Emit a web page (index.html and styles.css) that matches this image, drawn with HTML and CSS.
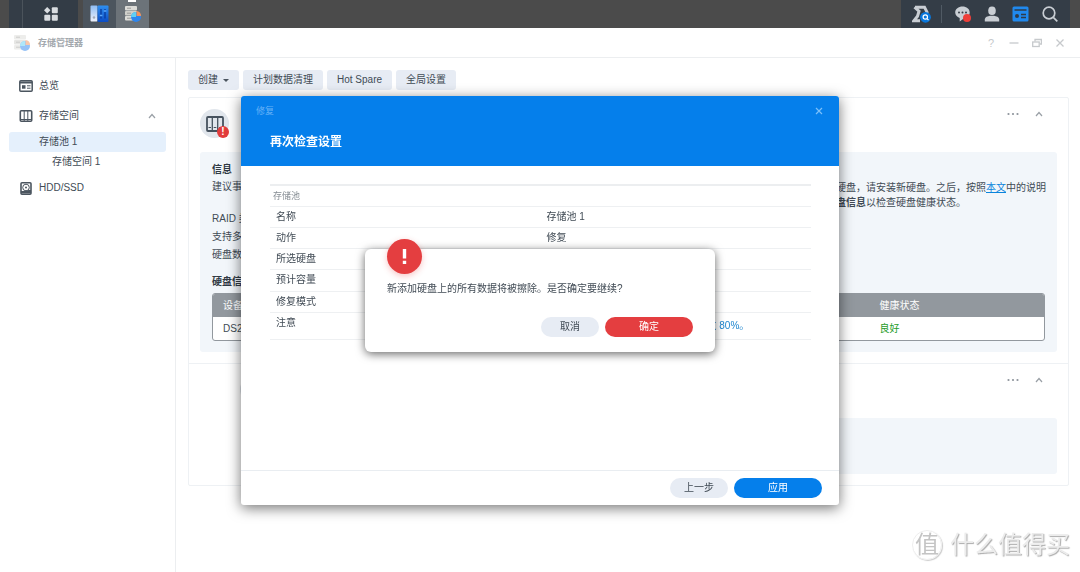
FILE: index.html
```
<!DOCTYPE html>
<html lang="zh-CN">
<head>
<meta charset="utf-8">
<title>存储管理器</title>
<link rel="stylesheet" href="styles.css">
</head>
<body>
<svg class="defs" aria-hidden="true">
  <defs>
    <linearGradient id="panel-blue" x1="0" y1="0" x2="0" y2="1"><stop offset="0" stop-color="#2f8ff0"/><stop offset="1" stop-color="#0b4cc4"/></linearGradient>
    <linearGradient id="panel-light" x1="0" y1="0" x2="0" y2="1"><stop offset="0" stop-color="#8fbdf3"/><stop offset="1" stop-color="#eef1fa"/></linearGradient>
    <symbol id="storage" viewBox="0 0 18 18">
      <rect x="1" y="1" width="12" height="4.500" rx="1" fill="#dcdcd8"/><rect x="1" y="6" width="12" height="4.500" rx="1" fill="#cfcfca"/><rect x="1" y="11" width="12" height="4.500" rx="1" fill="#dcdcd8"/>
      <path d="M3 3.200h4M3 8.200h4M3 13.200h4" stroke="#9a9a98"/>
      <circle cx="12" cy="12" r="5" fill="#2f86ee"/><path d="M12 12V7a5 5 0 0 0-5 5z" fill="#5fd0f5"/><path d="M12.500 11V6a5 5 0 0 1 4.500 5z" fill="#f4935c"/>
    </symbol>
    <symbol id="pool" viewBox="0 0 18 16"><rect x="1" y="1" width="16" height="14" rx="1" fill="none" stroke="#46525e" stroke-width="1.800"/><path d="M6.300 1v14M11.700 1v14" stroke="#46525e" stroke-width="1.300"/><path d="M2.500 11.500h2.500M7.700 11.500h2.600M13 11.500h2.500" stroke="#46525e"/></symbol>
    <symbol id="up" viewBox="0 0 8 6"><path d="M1 5l3-3.500L7 5" fill="none" stroke="#9aa0a6" stroke-width="1.200"/></symbol>
    <symbol id="more" viewBox="0 0 12 4"><circle cx="1.500" cy="2" r="1.100" fill="#8d949b"/><circle cx="6" cy="2" r="1.100" fill="#8d949b"/><circle cx="10.500" cy="2" r="1.100" fill="#8d949b"/></symbol>
  </defs>
</svg>

<header class="taskbar">
  <div class="task-edge"></div>
  <button class="task task-menu" aria-label="主菜单"><svg width="14" height="14" viewBox="0 0 14 14" fill="#d9dce0"><path d="M3.200 0l3.200 3.200-3.200 3.200L0 3.200z"/><rect x="7.800" y="0.300" width="6" height="6" rx="1"/><rect x="0.300" y="7.800" width="6" height="6" rx="1"/><rect x="7.800" y="7.800" width="6" height="6" rx="1"/></svg></button>
  <button class="task task-app" aria-label="控制面板"><svg width="19" height="18" viewBox="0 0 19 18"><rect x="0.500" y="0.500" width="7" height="16" rx="1" fill="url(#panel-light)"/><circle cx="4" cy="12.500" r="1.200" fill="#a1a9b8"/><rect x="7.500" y="0.500" width="11" height="16.500" rx="1" fill="url(#panel-blue)"/><path d="M11 4v9.500M15 4v9.500" stroke="#073b9d" stroke-width="1.300"/><path d="M9.800 10.500h2.600M13.700 6h2.600" stroke="#5ba9fa" stroke-width="1.500"/></svg></button>
  <button class="task task-app task-active" aria-label="存储管理器"><svg width="18" height="18"><use href="#storage"/></svg></button>
  <div class="tray">
    <button class="tray-item" aria-label="资源监控"><svg width="20" height="18" viewBox="0 0 20 18"><path d="M3 2.200h9.500l3 6M2.500 2.200l4.500 4-1.500 5-3.500 4.500h6M7 6.200l-1.500 5" fill="none" stroke="#c9ced4" stroke-width="3"/><circle cx="13.500" cy="12.300" r="5.400" fill="#0877dd"/><circle cx="13.300" cy="12" r="2.200" fill="none" stroke="#fff" stroke-width="1.200"/><path d="M15 13.700l1.500 1.500" stroke="#fff" stroke-width="1.200"/></svg></button>
    <span class="tray-line"></span>
    <button class="tray-item" aria-label="通知"><svg width="18" height="18" viewBox="0 0 18 18"><path d="M8.500 1.500c4 0 7.200 2.500 7.200 6s-3 6-6 6l-4 3v-3.600C3 12 1.200 10 1.200 7.500c0-3.500 3.300-6 7.300-6z" fill="#c9ced4"/><circle cx="5" cy="7.500" r="1" fill="#343d47"/><circle cx="8.500" cy="7.500" r="1" fill="#343d47"/><circle cx="12" cy="7.500" r="1" fill="#343d47"/><circle cx="13" cy="13" r="4" fill="#ee3f3a"/></svg></button>
    <button class="tray-item" aria-label="用户"><svg width="16" height="16" viewBox="0 0 16 16" fill="#c9ced4"><ellipse cx="8" cy="4.800" rx="3.800" ry="4.300"/><path d="M0.800 15.500v-2c0-2.400 3-3.500 5.200-3.800h4c2.200.3 5.200 1.400 5.200 3.800v2z"/></svg></button>
    <button class="tray-item" aria-label="小组件"><svg width="17" height="16" viewBox="0 0 17 16"><rect x="0.500" y="0.500" width="16" height="15" rx="1.500" fill="#2089ee"/><path d="M2.500 4h12M9 8.500h5M9 11.500h5" stroke="#2f3b48" stroke-width="1.500"/><circle cx="5" cy="10" r="2" fill="#2f3b48"/></svg></button>
    <button class="tray-item" aria-label="搜索"><svg width="16" height="16" viewBox="0 0 16 16" fill="none" stroke="#c9ced4" stroke-width="1.700"><circle cx="7" cy="7" r="5.800"/><path d="M11.300 11.300l4 4"/></svg></button>
  </div>
</header>

<div class="window">
  <div class="titlebar">
    <svg class="faded" width="18" height="18"><use href="#storage"/></svg>
    <h1 class="app-title">存储管理器</h1>
    <div class="window-tools">
      <button aria-label="帮助" class="help">?</button>
      <button aria-label="最小化"><svg width="10" height="10" viewBox="0 0 10 10"><path d="M0.500 5h9" stroke="#c6c9cc" stroke-width="1.300"/></svg></button>
      <button aria-label="还原"><svg width="10" height="10" viewBox="0 0 10 10" fill="none" stroke="#c6c9cc" stroke-width="1.300"><path d="M3 3.500V1.500h6.400v4.500H8"/><rect x="0.700" y="4" width="6.500" height="4.500"/></svg></button>
      <button aria-label="关闭"><svg width="10" height="10" viewBox="0 0 10 10"><path d="M1.500 1.500l7 7M8.500 1.500l-7 7" stroke="#c6c9cc" stroke-width="1.300"/></svg></button>
    </div>
  </div>

  <div class="content">
    <nav class="sidebar">
      <a class="nav-item" href="#"><svg width="14" height="12" viewBox="0 0 14 12"><rect x="0.800" y="0.800" width="12.400" height="10.400" rx="1" fill="none" stroke="#4b555f" stroke-width="1.500"/><path d="M1 2.500h12" stroke="#4b555f" stroke-width="2"/><rect x="3" y="5.200" width="3.500" height="3.500" fill="#4b555f"/><path d="M8 5.800h3.500M8 8.200h3.500" stroke="#4b555f"/></svg>总览</a>
      <a class="nav-item" href="#"><svg width="14" height="12" viewBox="0 0 14 12"><rect x="1.300" y="0.800" width="11.400" height="10.400" rx="1" fill="none" stroke="#4b555f" stroke-width="1.600"/><path d="M5.200 1v10M8.800 1v10M2 9.500h10" stroke="#4b555f"/></svg>存储空间<svg class="nav-arrow" width="8" height="6"><use href="#up"/></svg></a>
      <a class="nav-sub nav-selected" href="#">存储池 1</a>
      <a class="nav-sub nav-deep" href="#">存储空间 1</a>
      <a class="nav-item nav-last" href="#"><svg width="14" height="13" viewBox="0 0 14 13"><rect x="2" y="0.800" width="10" height="11.400" rx="1" fill="none" stroke="#4b555f" stroke-width="1.600"/><path d="M2 9h3l2-1h5v3.500H2z" fill="#4b555f"/><circle cx="7" cy="5.500" r="3.300" fill="#fff" stroke="#4b555f"/><circle cx="7" cy="5.500" r="1" fill="#4b555f"/></svg>HDD/SSD</a>
    </nav>

    <main class="main">
      <div class="toolbar">
        <button class="tool">创建 <span class="caret"></span></button>
        <button class="tool">计划数据清理</button>
        <button class="tool">Hot Spare</button>
        <button class="tool">全局设置</button>
      </div>
      <div class="card">
        <section class="pool">
          <div class="pool-head">
            <span class="pool-icon"><svg width="18" height="16"><use href="#pool"/></svg><span class="alert-badge">!</span></span>
            <div class="pool-name"><span>存储池 1</span><span>堪用</span></div>
            <button class="plain" aria-label="更多"><svg width="12" height="4"><use href="#more"/></svg></button>
            <button class="plain" aria-label="收起"><svg width="8" height="6"><use href="#up"/></svg></button>
          </div>
          <div class="info">
            <h2>信息</h2>
            <dl class="facts">
              <dt>建议事项</dt>
              <dd class="advice">存储池已损毁并处于降级状态，我们建议您尽快修复该存储池以确保数据安全。若系统中没有可用于修复操作的硬盘，请安装新硬盘。之后，按照<a href="#">本文</a>中的说明<br>进行操作以更换有问题的硬盘。修复完成之后，存储池的状态将会恢复为正常。您也可以随时前往页面下方的<b>硬盘信息</b>以检查硬盘健康状态。</dd>
              <dt>RAID 类型</dt><dd>RAID 5</dd>
              <dt>支持多个存储空间</dt><dd>是</dd>
              <dt>硬盘数量下限</dt><dd>3</dd>
            </dl>
            <h2>硬盘信息</h2>
            <table class="disks">
              <thead><tr><th>设备</th><th class="status-col">健康状态</th></tr></thead>
              <tbody><tr><td>DS220+</td><td class="healthy">良好</td></tr></tbody>
            </table>
          </div>
        </section>
        <section class="pool pool-volume">
          <div class="pool-head">
            <span class="pool-icon"></span>
            <div class="pool-name"></div>
            <button class="plain" aria-label="更多"><svg width="12" height="4"><use href="#more"/></svg></button>
            <button class="plain" aria-label="收起"><svg width="8" height="6"><use href="#up"/></svg></button>
          </div>
          <div class="info info-volume"></div>
        </section>
      </div>
    </main>
  </div>
</div>

<div class="overlay">
  <section class="wizard" role="dialog" aria-labelledby="wizard-title">
    <header class="wizard-head">
      <div class="wizard-bar"><span>修复</span><button class="wizard-close" aria-label="关闭"><svg width="8" height="8" viewBox="0 0 8 8"><path d="M1 1l6 6M7 1L1 7" stroke="#7cc0fa" stroke-width="1.200"/></svg></button></div>
      <h2 id="wizard-title">再次检查设置</h2>
    </header>
    <div class="wizard-body">
      <table class="summary">
        <thead><tr><th colspan="2">存储池</th></tr></thead>
        <tbody>
          <tr><td>名称</td><td>存储池 1</td></tr>
          <tr><td>动作</td><td>修复</td></tr>
          <tr><td>所选硬盘</td><td>硬盘 2</td></tr>
          <tr class="tall"><td>预计容量</td><td>3.6 TB</td></tr>
          <tr><td>修复模式</td><td>常规修复</td></tr>
          <tr class="note"><td>注意</td><td class="note-value">请确保该存储池的空间使用率不要超过 80%。</td></tr>
        </tbody>
      </table>
    </div>
    <footer class="wizard-foot">
      <button class="pill">上一步</button>
      <button class="pill pill-wide pill-blue">应用</button>
    </footer>
  </section>
</div>

<div class="overlay">
  <section class="message" role="alertdialog" aria-labelledby="message-text">
    <span class="message-icon"><svg width="35" height="35" viewBox="0 0 35 35"><path d="M15.800 10h3.400v9.500h-3.400zM15.800 21.800h3.400V25h-3.400z" fill="#fff"/></svg></span>
    <p id="message-text">新添加硬盘上的所有数据将被擦除。是否确定要继续?</p>
    <div class="message-actions">
      <button class="pill">取消</button>
      <button class="pill pill-wide pill-red">确定</button>
    </div>
  </section>
</div>

<div class="watermark"><span class="watermark-mark">值</span><span>什么值得买</span></div>
</body>
</html>
```
FILE: styles.css
```
* { box-sizing: border-box; }
body {
  margin: 0;
  min-height: 100vh;
  display: flex;
  flex-direction: column;
  background: #fff;
  color: #414b55;
  font: 10px/16px "Liberation Sans", "Noto Sans CJK SC", sans-serif;
  overflow: hidden;
}
button { border: 0; padding: 0; background: none; color: inherit; font: inherit; cursor: pointer; }
h1, h2, p, dl, dd { margin: 0; }
svg { display: block; flex: none; }
a { color: inherit; text-decoration: none; }
.defs { position: absolute; width: 0; height: 0; }

/* Taskbar */
.taskbar { display: flex; height: 28px; padding: 0 10px 0 9px; background: #4b4b4b; }
.task-edge { width: 14px; background: #343d47; border-right: 1px solid #4b535b; }
.task { display: grid; place-items: center; }
.task-menu { width: 55px; margin-right: 5px; background: #333c46; }
.task-app { width: 33px; background: #4c555e; }
.task-active { position: relative; background: #6c7379; }
.task-active::before { content: ""; position: absolute; top: 0; left: 12px; width: 8px; height: 2px; background: #fff; }
.tray { display: flex; align-items: center; margin-left: auto; padding: 0 12px 0 11px; gap: 12px; background: #343d47; }
.tray-item { display: grid; place-items: center; width: 17px; }
.tray-line { width: 1px; height: 18px; background: #505a64; }

/* Window */
.window { flex: 1; display: flex; flex-direction: column; }
.titlebar { display: flex; align-items: center; height: 30px; padding: 0 15px 0 13px; gap: 7px; border-bottom: 1px solid #eceef0; }
.faded { opacity: 0.5; }
.app-title { font-size: 9px; font-weight: bold; color: #a3a8ad; }
.window-tools { display: flex; gap: 13px; margin-left: auto; color: #c6c9cc; }
.window-tools button { display: grid; place-items: center; width: 10px; }
.window-tools .help { font-size: 11px; }
.content { flex: 1; display: flex; }
.sidebar { width: 176px; padding: 18px 9px; border-right: 1px solid #eceef0; display: flex; flex-direction: column; }
.nav-item { display: flex; align-items: center; height: 20px; margin-bottom: 10px; padding: 0 10px; gap: 6px; }
.nav-item + .nav-item { margin-bottom: 6px; }
.nav-arrow { margin-left: auto; }
.nav-sub { height: 20px; padding-left: 30px; line-height: 20px; border-radius: 3px; }
.nav-selected { background: #e5f0fc; }
.nav-deep { padding-left: 43px; }
.nav-last { margin-top: 6px; }

/* Main column */
.main { flex: 1; min-width: 0; padding: 12px 11px 12px 12px; }
.toolbar { display: flex; gap: 4px; margin-bottom: 7px; }
.tool { display: flex; align-items: center; height: 20px; padding: 0 10px; border-radius: 3px; background: #e7ecf4; }
.caret { margin-left: 5px; border: 3px solid transparent; border-top-color: #4b555f; border-bottom: 0; }
.card { border: 1px solid #eef1f4; border-radius: 2px; }
.pool { padding: 11px; }
.pool-volume { border-top: 1px solid #eef1f4; }
.pool-head { display: flex; gap: 12px; height: 43px; padding-right: 11px; }
.pool-icon { position: relative; display: grid; place-items: center; width: 29px; height: 29px; border-radius: 50%; background: #e1e6ec; }
.pool-volume .pool-icon { margin-left: 40px; }
.alert-badge { position: absolute; right: 0; bottom: 0; width: 12px; height: 12px; border-radius: 50%; background: #e23c3c; color: #fff; font-weight: bold; line-height: 12px; text-align: center; }
.pool-name { flex: 1; display: flex; flex-direction: column; }
.plain { display: grid; place-items: center; width: 14px; height: 10px; }
.info { padding: 10px 12px 11px; border-radius: 3px; background: #f2f6fa; }
.info h2 { font-size: 10px; line-height: 16px; color: #303a44; }
.info-volume { height: 56px; margin-left: 42px; }
.facts { display: grid; grid-template-columns: 134px 1fr; grid-auto-rows: minmax(17px, auto); line-height: 18px; margin-bottom: 10px; }
.facts .advice { line-height: 15px; margin: 2px 0 0; white-space: nowrap; }
.disks { margin-top: 3px; }
.advice a { color: #0a84dc; text-decoration: underline; }
.disks { width: 100%; border: 1px solid #92989e; border-radius: 3px; border-spacing: 0; overflow: hidden; background: #fff; table-layout: fixed; }
.disks th, .disks td { height: 23px; padding: 0 10px; text-align: left; font-weight: normal; }
.disks th { background: #92989e; color: #fff; }
.disks .status-col { width: 21%; }
.disks .healthy { color: #1f9d2b; }

/* Dialogs */
.overlay { position: fixed; inset: 28px 0 0; display: grid; place-items: center; }
.wizard { display: flex; flex-direction: column; width: 598px; min-height: 409px; border-radius: 3px; overflow: hidden; background: #fff; }
.overlay:has(.wizard) { filter: drop-shadow(0 3px 7px rgba(0, 0, 0, 0.55)); }
.wizard-head { height: 70px; padding: 7px 15px; background: #057feb; color: #fff; }
.wizard-bar { display: flex; align-items: center; justify-content: space-between; font-size: 9px; color: #66b2f7; }
.wizard-close { display: grid; place-items: center; width: 10px; height: 16px; }
.wizard-head h2 { margin: 14px 14px 0; font-size: 12px; line-height: 18px; }
.wizard-body { flex: 1; padding: 18px 28px 0 29px; }
.summary { width: 100%; border-collapse: collapse; table-layout: fixed; border-top: 2px solid #eceef0; }
.summary tr { border-bottom: 1px solid #eef0f2; }
.summary th, .summary td { height: 21px; padding: 0 6px; text-align: left; line-height: 20px; }
.summary th { padding: 0 3px; font-size: 9px; font-weight: normal; color: #858c93; }
.summary .tall td { height: 22px; }
.summary .note td { height: 27px; vertical-align: top; }
.summary .note .note-value { vertical-align: middle; color: #1e86cf; }
.wizard-foot { display: flex; justify-content: flex-end; gap: 6px; padding: 7px 17px; border-top: 1px solid #e9edf1; }
.pill { width: 58px; height: 20px; border-radius: 10px; background: #e7ecf4; }
.pill-wide { width: 88px; }
.pill-blue { background: #057feb; color: #fff; }
.pill-red { background: #e43e40; color: #fff; }
.message { position: relative; width: 350px; padding: 32px 22px 15px; border-radius: 6px; background: #fff; box-shadow: 0 2px 10px rgba(0, 0, 0, 0.6); }
.message-icon { position: absolute; top: -10px; left: 22px; border-radius: 50%; background: #e43e40; box-shadow: 0 2px 6px rgba(228, 62, 64, 0.3); }
.message-actions { display: flex; justify-content: flex-end; gap: 6px; margin-top: 20px; }

/* Watermark */
.watermark { position: fixed; right: 10px; bottom: 11px; display: flex; align-items: center; gap: 8px; color: #ececec; font-size: 24px; line-height: 32px; text-shadow: 1px 1px 1px #aaa; pointer-events: none; }
.watermark-mark { width: 30px; height: 30px; border: 1px solid #eee; border-radius: 50%; box-shadow: 1px 1px 1px #ccc; color: #c4c4c4; text-shadow: none; line-height: 27px; text-align: center; }
```
